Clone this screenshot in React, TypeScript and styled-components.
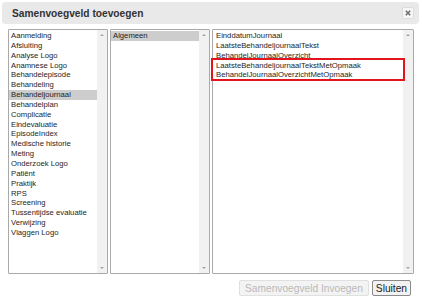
import React from 'react';
import styled, {createGlobalStyle} from 'styled-components';

const GlobalStyle = createGlobalStyle`
    html, body {
        margin: 0;
        padding: 0;
        background: #ffffff;
        font-family: "Liberation Sans", Arial, sans-serif;
    }
`;

const categories = [
    'Aanmelding', 'Afsluiting', 'Analyse Logo', 'Anamnese Logo', 'Behandelepisode',
    'Behandeling', 'Behandeljournaal', 'Behandelplan', 'Complicatie', 'Eindevaluatie',
    'EpisodeIndex', 'Medische historie', 'Meting', 'Onderzoek Logo', 'Patiënt',
    'Praktijk', 'RPS', 'Screening', 'Tussentijdse evaluatie', 'Verwijzing', 'Vlaggen Logo'
];

const groups = ['Algemeen'];

const fields = [
    'EinddatumJournaal',
    'LaatsteBehandeljournaalTekst',
    'BehandelJournaalOverzicht',
    'LaatsteBehandeljournaalTekstMetOpmaak',
    'BehandelJournaalOverzichtMetOpmaak'
];

const Dialog = styled.div`
    width: 422px;
    height: 302px;
    box-sizing: border-box;
    display: flex;
    flex-direction: column;
    background: #fff;
`;

const TitleBar = styled.div`
    margin: 2px 3px 0 2px;
    height: 22px;
    background: #e9e9e9;
    border-radius: 4px;
    display: flex;
    align-items: center;
    justify-content: space-between;
    padding: 0 5px 0 10px;
`;

const Title = styled.h1`
    margin: 0;
    font-size: 10.2px;
    font-weight: bold;
    color: #333;
`;

const CloseButton = styled.button`
    width: 12px;
    height: 12px;
    padding: 0;
    border: 1px solid #dcdcdc;
    border-radius: 2px;
    background: #f6f6f6;
    display: flex;
    align-items: center;
    justify-content: center;
`;

const Lists = styled.div`
    display: grid;
    grid-template-columns: 100px 100px 202px;
    column-gap: 2px;
    margin: 5px 0 0 8px;
    height: 245px;
`;

const ListBox = styled.div`
    position: relative;
    border: 1px solid #a9a9a9;
    border-radius: 1px;
    display: flex;
    background: #fff;
`;

const Items = styled.div`
    flex: 1;
    padding-top: 1px;
    overflow: hidden;
`;

const Item = styled.div<{$selected?: boolean; $pad: number}>`
    font-size: 7.7px;
    line-height: 9.85px;
    height: 9.85px;
    padding-left: ${props => props.$pad}px;
    color: #1e1e1e;
    white-space: nowrap;
    background: ${props => props.$selected ? '#cdcdcd' : 'transparent'};
`;

const Scrollbar = styled.div`
    width: 10px;
    background: #f1f1f1;
    display: flex;
    flex-direction: column;
    justify-content: space-between;
    align-items: center;
    padding: 4px 0;
`;

const Arrow = styled.div<{$down?: boolean}>`
    width: 0;
    height: 0;
    border-left: 2px solid transparent;
    border-right: 2px solid transparent;
    ${props => props.$down ? 'border-top: 2px solid #a3a3a3;' : 'border-bottom: 2px solid #a3a3a3;'}
`;

const Highlight = styled.div`
    position: absolute;
    left: -2px;
    top: 28px;
    width: 190px;
    height: 19px;
    border: 2px solid #e3141c;
`;

const Footer = styled.div`
    display: flex;
    justify-content: flex-end;
    gap: 3px;
    margin: 6px 11px 0 0;
`;

const Button = styled.button<{$disabled?: boolean}>`
    height: 16px;
    padding: 0 ${props => props.$disabled ? 5 : 3}px;
    font-family: "Liberation Sans", Arial, sans-serif;
    font-size: 10.2px;
    border-radius: 2px;
    border: 1px solid ${props => props.$disabled ? '#e0e0e0' : '#8a8a8a'};
    background: ${props => props.$disabled ? '#f3f3f3' : '#f2f2f2'};
    color: ${props => props.$disabled ? '#b9b9b9' : '#1a1a1a'};
`;

type ListProps = {
    items: string[];
    selected?: string;
    pad?: number;
    children?: React.ReactNode;
};

const List = ({items, selected, pad = 2, children}: ListProps) => (
    <ListBox>
        <Items>
            {items.map(item => <Item key={item} $pad={pad} $selected={item === selected}>{item}</Item>)}
        </Items>
        <Scrollbar>
            <Arrow />
            <Arrow $down />
        </Scrollbar>
        {children}
    </ListBox>
);

const App = () => (
    <Dialog>
        <GlobalStyle />
        <TitleBar>
            <Title>Samenvoegveld toevoegen</Title>
            <CloseButton>
                <svg width="6" height="6" viewBox="0 0 6 6">
                    <path d="M0.8 0.8 L5.2 5.2 M5.2 0.8 L0.8 5.2" stroke="#6e6e6e" strokeWidth="1.6" />
                </svg>
            </CloseButton>
        </TitleBar>
        <Lists>
            <List items={categories} selected="Behandeljournaal" />
            <List items={groups} selected="Algemeen" />
            <List items={fields} pad={3}>
                <Highlight />
            </List>
        </Lists>
        <Footer>
            <Button $disabled disabled>Samenvoegveld Invoegen</Button>
            <Button>Sluiten</Button>
        </Footer>
    </Dialog>
);

export default App;
